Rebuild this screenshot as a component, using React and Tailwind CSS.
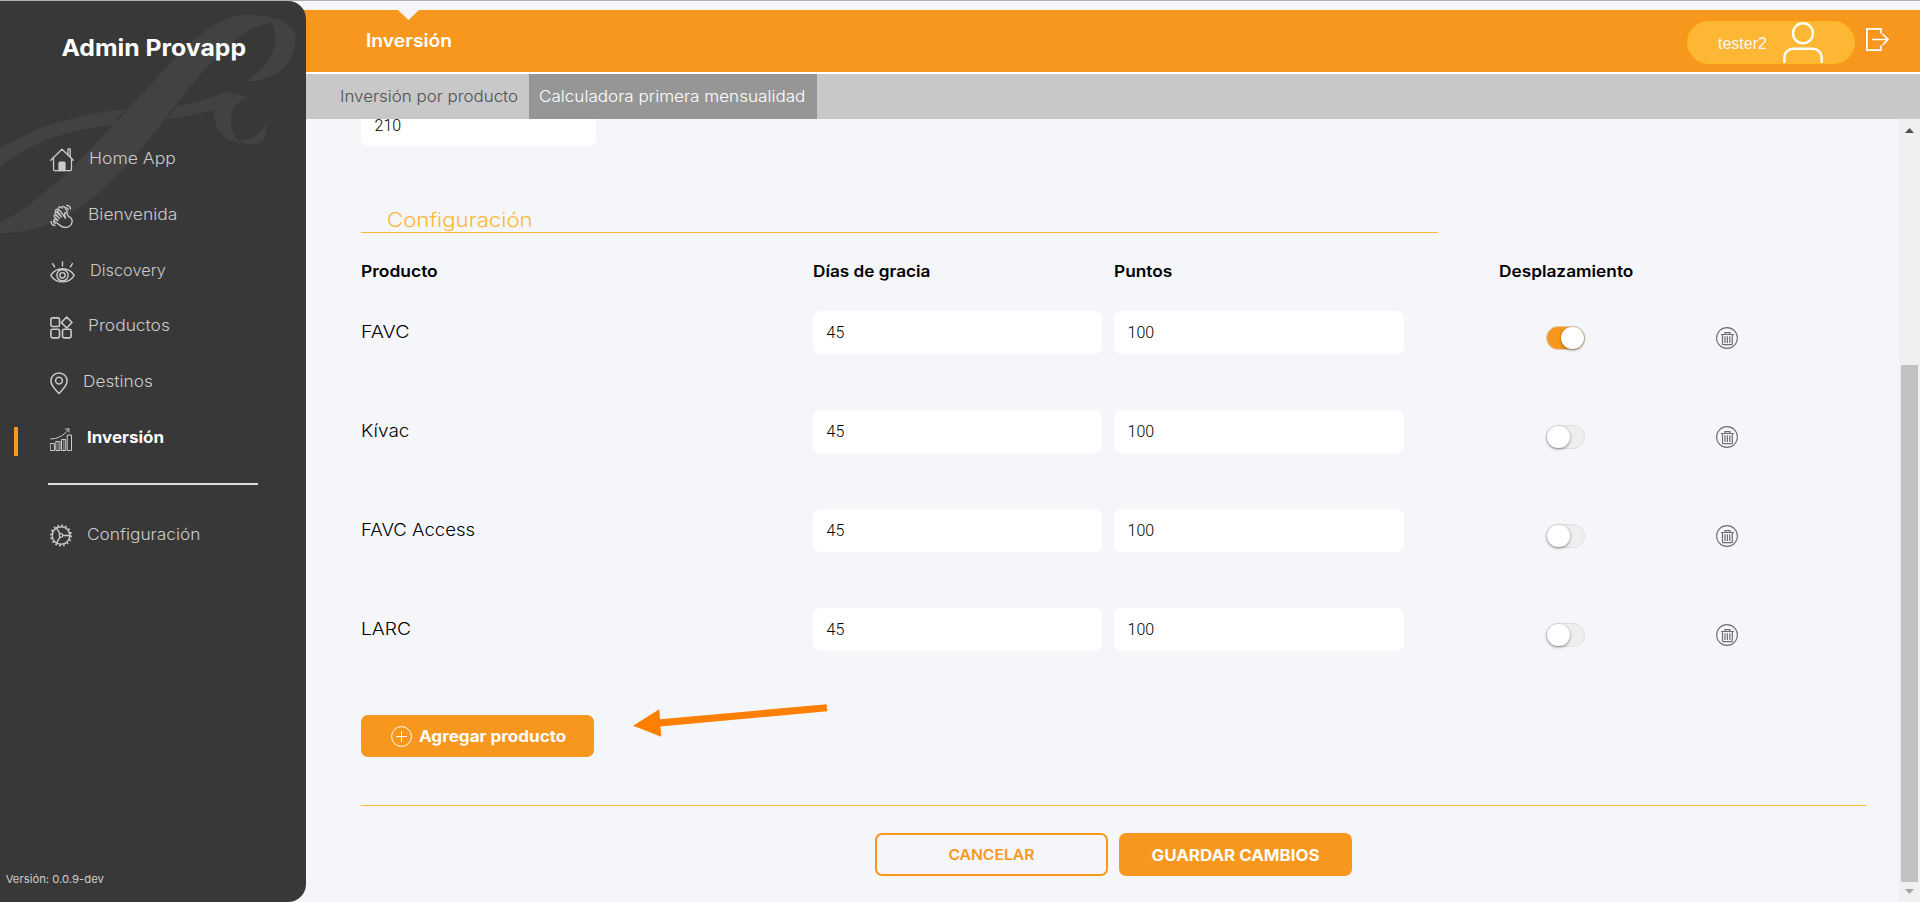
const stroke = { fill: "none", stroke: "currentColor", strokeLinecap: "round", strokeLinejoin: "round" };

function HomeIcon() {
  return (
    <svg width="24" height="24" viewBox="0 0 24 24" {...stroke} strokeWidth="1.3">
      <path d="M.7 12.3 12 1.2l11.3 11.1M3.5 10v11.3c0 .8.5 1.3 1.3 1.3h15.400c.8 0 1.300-.5 1.300-1.300V10M18 6.500V.800h2.200V8.800" />
      <path d="M9 22.500v-7.500c0-.6.3-.9.9-.9h4.200c.6 0 .9.300.900.900v7.500z" fill="currentColor" />
    </svg>
  );
}

function ClapIcon() {
  return (
    <svg width="23" height="24" viewBox="0 0 23 24" {...stroke} strokeWidth="1.3">
      <path d="M9.300 20.800 4.600 17.300c-1.300-1.100-.2-2.700 1.200-1.900l2.200 1.300-3.600-3.900c-1.100-1.300.4-2.600 1.600-1.500l3.500 3.300-4.200-5c-1-1.400.6-2.600 1.700-1.400l4.400 4.700-3.400-5c-.8-1.500.9-2.400 1.900-1.200l5.500 7.300" />
      <path d="M15.400 14c-.3-1.800-1.100-3.300-.8-4.600.4-1.200 2-1 2.500.2l1.300 2.700c3 1.200 4.200 3.300 3.600 6-.8 3-3.300 4.900-6.600 5.100-2.600.1-4.500-1-6.100-2.600" />
      <path d="M5.900 7.600C5 5.700 6.600 4.400 8 5.600M8.800 4.800c-.5-1.900 1.300-2.600 2.400-1.200M12.200 4c0-1.800 1.700-2 2.500-.7l2.700 4.700" />
      <path d="M15.900 3.600c1.300.1 2.100.8 2.400 2.200M16.600 1.300c2.300 0 3.700 1.300 3.900 3.600M3.400 17.200c0 1.200.6 2 1.800 2.500M1.100 17.500c0 2.300 1.400 3.700 3.700 4" />
    </svg>
  );
}

function EyeIcon() {
  return (
    <svg width="25" height="22" viewBox="0 0 25 22" {...stroke} strokeWidth="1.4">
      <path d="M.8 14.300C3.500 10 7.500 7.700 12.500 7.700s9 2.300 11.700 6.600c-2.700 4.300-6.700 6.600-11.700 6.600S3.500 18.600.8 14.300z" />
      <circle cx="12.500" cy="14.300" r="5.600" />
      <circle cx="12.500" cy="14.300" r="2.700" />
      <path d="M12.500.9v4M2.600 2.600l2 3.300M22.400 2.600l-2 3.300" />
    </svg>
  );
}

function ProductsIcon() {
  return (
    <svg width="23" height="23" viewBox="0 0 23 23" {...stroke} strokeWidth="1.6">
      <rect x=".9" y="1.900" width="8.600" height="8.600" rx="1.600" />
      <rect x=".9" y="13.300" width="8.600" height="8.600" rx="1.600" />
      <rect x="12.500" y="13.300" width="8.600" height="8.600" rx="1.600" />
      <path d="m16.700 1 5.300 5.500-5.300 5.500-5.300-5.500z" />
    </svg>
  );
}

function PinIcon() {
  return (
    <svg width="18" height="23" viewBox="0 0 18 23" {...stroke} strokeWidth="1.5">
      <path d="M9 21.500C4.500 17 .9 12.800.9 9a8.100 8.100 0 0 1 16.200 0c0 3.800-3.600 8-8.100 12.500z" />
      <circle cx="9" cy="8.600" r="3.400" />
    </svg>
  );
}

function ChartIcon() {
  return (
    <svg width="22" height="23" viewBox="0 0 22 23" {...stroke} strokeWidth="1">
      <path d="M.6 15.500h3.800v7H.6zM6.200 13.500H10v9H6.200zM11.900 11.500h3.800v11h-3.800zM17.600 7h3.900v15.500h-3.900z" />
      <path d="M.6 11C8 10.800 14 7.500 18.600 1.200M15.500 1.200l3.300-.6.2 3.400" />
      <path d="M8.100 13.500v9M13.800 11.500v11" strokeWidth="1.400" opacity=".5" />
    </svg>
  );
}

function GearIcon() {
  return (
    <svg width="22" height="23" viewBox="0 0 22 22" {...stroke} strokeWidth="1.4">
      <circle cx="11" cy="11" r="8.800" />
      <circle cx="11" cy="11" r="10.200" strokeWidth="1.600" strokeDasharray="1.800 2.206" strokeLinecap="butt" />
      <circle cx="11" cy="11" r="1.800" strokeWidth="1.200" />
      <path d="M13 11h7M10 9.300 6.500 3.300M10 12.700l-3.500 6" />
    </svg>
  );
}

function TrashIcon() {
  return (
    <svg width="22" height="22" viewBox="0 0 22 22" fill="none" stroke="#6e6e73" strokeWidth="1">
      <circle cx="11" cy="11" r="10.400" strokeWidth="1.100" />
      <path d="M5 7.500h13M9 7.300V5.600h5v1.700M6.500 8v8.700c0 .6.300.9.900.9h8c.6 0 .9-.3.900-.9V8" strokeWidth="1.200" />
      <path d="M9 9.200V16M11.400 9.200V16M13.800 9.200V16" strokeWidth="1.200" />
    </svg>
  );
}

const nav = [
  { label: "Home App", icon: HomeIcon, text: "ml-[14.500px] scale-x-[1.097]" },
  { label: "Bienvenida", icon: ClapIcon, text: "ml-[14.500px] scale-x-[1.09]" },
  { label: "Discovery", icon: EyeIcon, text: "ml-[15px] scale-x-[1.02]" },
  { label: "Productos", icon: ProductsIcon, text: "ml-[14.500px] scale-x-[1.086]" },
  { label: "Destinos", icon: PinIcon, text: "ml-[14.500px] scale-x-[1.08]" },
  { label: "Inversión", icon: ChartIcon, text: "ml-[14.500px] scale-x-[1.062]", active: true },
];

const rows = [
  { name: "FAVC", scale: "scale-x-[1.12]", on: true },
  { name: "Kívac", scale: "scale-x-[1.084]", on: false },
  { name: "FAVC Access", scale: "scale-x-[1.06]", on: false },
  { name: "LARC", scale: "scale-x-[1.1]", on: false },
];

function Swash() {
  return (
    <svg className="absolute left-0 top-0" width="305" height="240" viewBox="0 0 915 720" fill="#424242">
      <path d="M0 665C60 637 120 587 200 517C260 457 300 412 345 367C420 287 500 192 575 122C640 67 690 41 745 41C800 43 850 59 868 67C840 63 800 63 770 77C690 112 590 227 500 347C420 452 350 537 250 612C170 669 90 697 0 696Z" />
      <path d="M815 65C850 59 880 72 886 107C888 187 830 241 740 240C800 202 850 127 815 65Z" />
      <path d="M0 443C100 379 240 337 376 325L338 371C200 387 80 427 0 499Z" />
      <path d="M534 315C590 305 640 287 684 272L745 290C715 297 692 322 692 359C692 392 708 417 728 429C680 422 640 392 641 327C600 339 550 349 498 355Z" />
      <path d="M720 417C755 419 785 397 797 369C805 402 790 431 755 431C742 430 730 427 720 417Z" />
    </svg>
  );
}

function Sidebar() {
  return (
    <aside className="relative mt-px flex h-[901px] w-[306px] shrink-0 flex-col overflow-hidden rounded-r-[18px] bg-[#383838]">
      <Swash />
      <div className="relative flex h-full flex-col">
        <h1 className="h-[129.200px] origin-left scale-x-[1.077] pl-[57px] pt-[31px] text-[23px] font-bold leading-[32px] text-white">
          Admin Provapp
        </h1>
        <nav>
          {nav.map(({ label, icon: Icon, text, active }) => (
            <a key={label} className="flex h-[55.800px] items-center text-[#cbcbcb]">
              <span className={"ml-[14px] mr-8 mt-[9px] h-[29px] w-1 " + (active ? "bg-[#f8971d]" : "")} />
              <span className="mt-1">
                <Icon />
              </span>
              <span className={text + " origin-left text-base leading-6 " + (active ? "font-bold text-white" : "font-light")}>{label}</span>
            </a>
          ))}
        </nav>
        <hr className="ml-12 mt-[18px] h-[2px] w-[210px] border-0 bg-[#dcdcdc]" />
        <a className="mt-[37px] flex h-6 items-center pl-[50px] text-[#cbcbcb]">
          <span className="mt-[3px]">
            <GearIcon />
          </span>
          <span className="ml-[14.500px] origin-left scale-x-[1.08] text-base font-light leading-6">Configuración</span>
        </a>
        <p className="mb-[15px] mt-auto origin-left scale-x-[1.026] pl-[5.500px] text-[11px] leading-4 text-[#cfcfcf]">Versión: 0.0.9-dev</p>
      </div>
    </aside>
  );
}

function TopBar() {
  return (
    <header className="-ml-[18px] mt-[9px] flex h-[62px] shrink-0 bg-[#f8971d] pl-[18px]">
      <div className="relative pl-[60px] pt-[16px]">
        <svg className="absolute left-[92px] top-0" width="21" height="10" viewBox="0 0 21 10">
          <path d="M0 0h21L10.500 10z" fill="#f4f6fa" />
        </svg>
        <span className="block origin-left scale-x-[1.073] text-lg font-semibold leading-[29px] text-white">Inversión</span>
      </div>
      <div className="ml-auto mr-[31px] flex">
        <div className="mt-[11px] flex h-[43px] w-[168px] rounded-[22px] border border-[#ffbb1c] bg-[#feb734] pl-[30px]">
          <span className="w-[65px] pt-[10px] font-['Liberation_Sans',sans-serif] text-base leading-6 text-[#f4f6fa]">tester2</span>
          <svg width="40" height="42" viewBox="0 0 40 42" fill="none" stroke="#fff" strokeWidth="2.400">
            <circle cx="20" cy="11.300" r="10" />
            <path d="M1.300 41v-4.500c0-6 3.700-9.800 9.700-9.800h18c6 0 9.700 3.800 9.700 9.800V41" />
          </svg>
        </div>
        <svg className="ml-[11px] mt-[18px]" width="23" height="23" viewBox="0 0 23 23" fill="none" stroke="#fff" strokeWidth="1.700">
          <path d="M15 5.500V.9H.9v21.200H15v-4.600M6 11.500h16M16.500 6l5.500 5.500-5.500 5.500" />
        </svg>
      </div>
    </header>
  );
}

function SubTabs() {
  return (
    <div className="flex h-[47px] shrink-0 border-t-2 border-white bg-[#c8c8c8] text-base font-light leading-[45px]">
      <span className="w-[223px] pl-[34px] text-[#505050]">
        <span className="inline-block origin-left scale-x-[1.057]">Inversión por producto</span>
      </span>
      <span className="w-[288px] bg-[#969696] pl-[10px] text-white">
        <span className="inline-block origin-left scale-x-[1.068]">Calculadora primera mensualidad</span>
      </span>
    </div>
  );
}

function Toggle({ on }) {
  return (
    <span
      className={
        "flex h-6 w-[39px] items-center rounded-full border " +
        (on ? "justify-end border-[#dccdb8] bg-[#f8971d]" : "justify-start border-[#dfdfdf] bg-[#eeeeee]")
      }
    >
      <span className="h-[22px] w-[23px] rounded-full bg-white shadow-[0_1px_3px_rgba(0,0,0,0.45)]" />
    </span>
  );
}

function Field({ value, className }) {
  return (
    <div
      className={
        "rounded-[7px] bg-white pl-[13.500px] font-['Roboto',sans-serif] text-base font-light text-black " + className
      }
    >
      {value}
    </div>
  );
}

function Content() {
  return (
    <main className="min-w-0 flex-1 overflow-hidden pl-[55px]">
      <Field value="210" className="h-[27px] w-[235px] rounded-t-none leading-[14px]" />
      <h2 className="mt-[62px] h-[25px] w-[1077px] border-b border-[#fdb933] pl-[26px] text-[20px] font-light leading-[24px] text-[#feb73b]">
        <span className="inline-block origin-left scale-x-[1.11]">Configuración</span>
      </h2>
      <div className="mt-[26px] grid grid-cols-[452px_301px_385px_1fr] text-base font-semibold leading-6 text-black">
        <span className="origin-left scale-x-[1.09] justify-self-start">Producto</span>
        <span className="origin-left scale-x-[1.074] justify-self-start">Días de gracia</span>
        <span className="origin-left scale-x-[1.08] justify-self-start">Puntos</span>
        <span className="-ml-[0.500px] origin-left scale-x-[1.079] justify-self-start">Desplazamiento</span>
      </div>
      <div className="mt-7 flex flex-col gap-14">
        {rows.map((r) => (
          <div key={r.name} className="grid h-[43px] grid-cols-[452px_301px_432px_170px_1fr]">
            <span className={"origin-left justify-self-start text-[17.500px] font-light leading-[41px] text-black " + r.scale}>{r.name}</span>
            <Field value="45" className="h-[43px] w-[289px] leading-[44px]" />
            <Field value="100" className="h-[43px] w-[290px] leading-[44px]" />
            <span className="pt-[15px]">
              <Toggle on={r.on} />
            </span>
            <span className="pt-4">
              <TrashIcon />
            </span>
          </div>
        ))}
      </div>
      <div className="mt-16 flex">
        <button className="flex h-[42px] w-[233px] items-center rounded-[7px] bg-[#f8971d] pl-[30px] text-white">
          <svg width="21" height="21" viewBox="0 0 21 21" fill="none" stroke="currentColor" strokeWidth="1">
            <circle cx="10.500" cy="10.500" r="9.900" />
            <path d="M10.500 5v11M5 10.500h11" />
          </svg>
          <span className="ml-[6.500px] origin-left scale-x-[1.067] text-base font-bold leading-6">Agregar producto</span>
        </button>
        <svg className="-mt-[11px] ml-[38px]" width="198" height="38" viewBox="0 0 198 38" fill="#ff7f00">
          <path d="M1 21.700 27.300 5.200 28 15.300 194.500.300 195.300 7.200 28.400 22.500 29.300 32.800z" />
        </svg>
      </div>
      <hr className="mt-[48px] h-px w-[1505px] border-0 bg-[#fdb933]" />
      <div className="mt-[27px] flex gap-[11px] pl-[514px]">
        <button className="h-[43px] w-[233px] rounded-[7px] border-2 border-[#f8971d] text-sm font-semibold leading-[40px] text-[#f8971d]">
          <span className="inline-block scale-x-[1.12]">CANCELAR</span>
        </button>
        <button className="h-[43px] w-[233px] rounded-[7px] bg-[#f8971d] text-base font-bold leading-[42px] text-white">
          <span className="inline-block scale-x-[1.057]">GUARDAR CAMBIOS</span>
        </button>
      </div>
    </main>
  );
}

function Scrollbar() {
  return (
    <div className="flex w-[21px] shrink-0 flex-col items-center bg-[#f0f0f0]">
      <svg className="mt-[9px]" width="9" height="5" viewBox="0 0 9 5">
        <path d="M4.500 0 9 5H0z" fill="#505050" />
      </svg>
      <div className="mt-[232px] h-[517px] w-[17px] bg-[#c1c1c1]" />
      <svg className="mt-[7px]" width="9" height="5" viewBox="0 0 9 5">
        <path d="M0 0h9L4.500 5z" fill="#a3a3a3" />
      </svg>
    </div>
  );
}

export default function App() {
  return (
    <div className="flex h-[902px] w-[1920px] flex-col overflow-hidden bg-[#f4f6fa] font-['Inter',sans-serif]">
      <div className="h-px shrink-0 bg-[#b0b0b0]" />
      <div className="flex min-h-0 flex-1">
        <div className="z-10 -mt-px flex">
          <Sidebar />
        </div>
        <div className="flex min-w-0 flex-1 flex-col">
          <TopBar />
          <SubTabs />
          <div className="flex min-h-0 flex-1">
            <Content />
            <Scrollbar />
          </div>
        </div>
      </div>
    </div>
  );
}
